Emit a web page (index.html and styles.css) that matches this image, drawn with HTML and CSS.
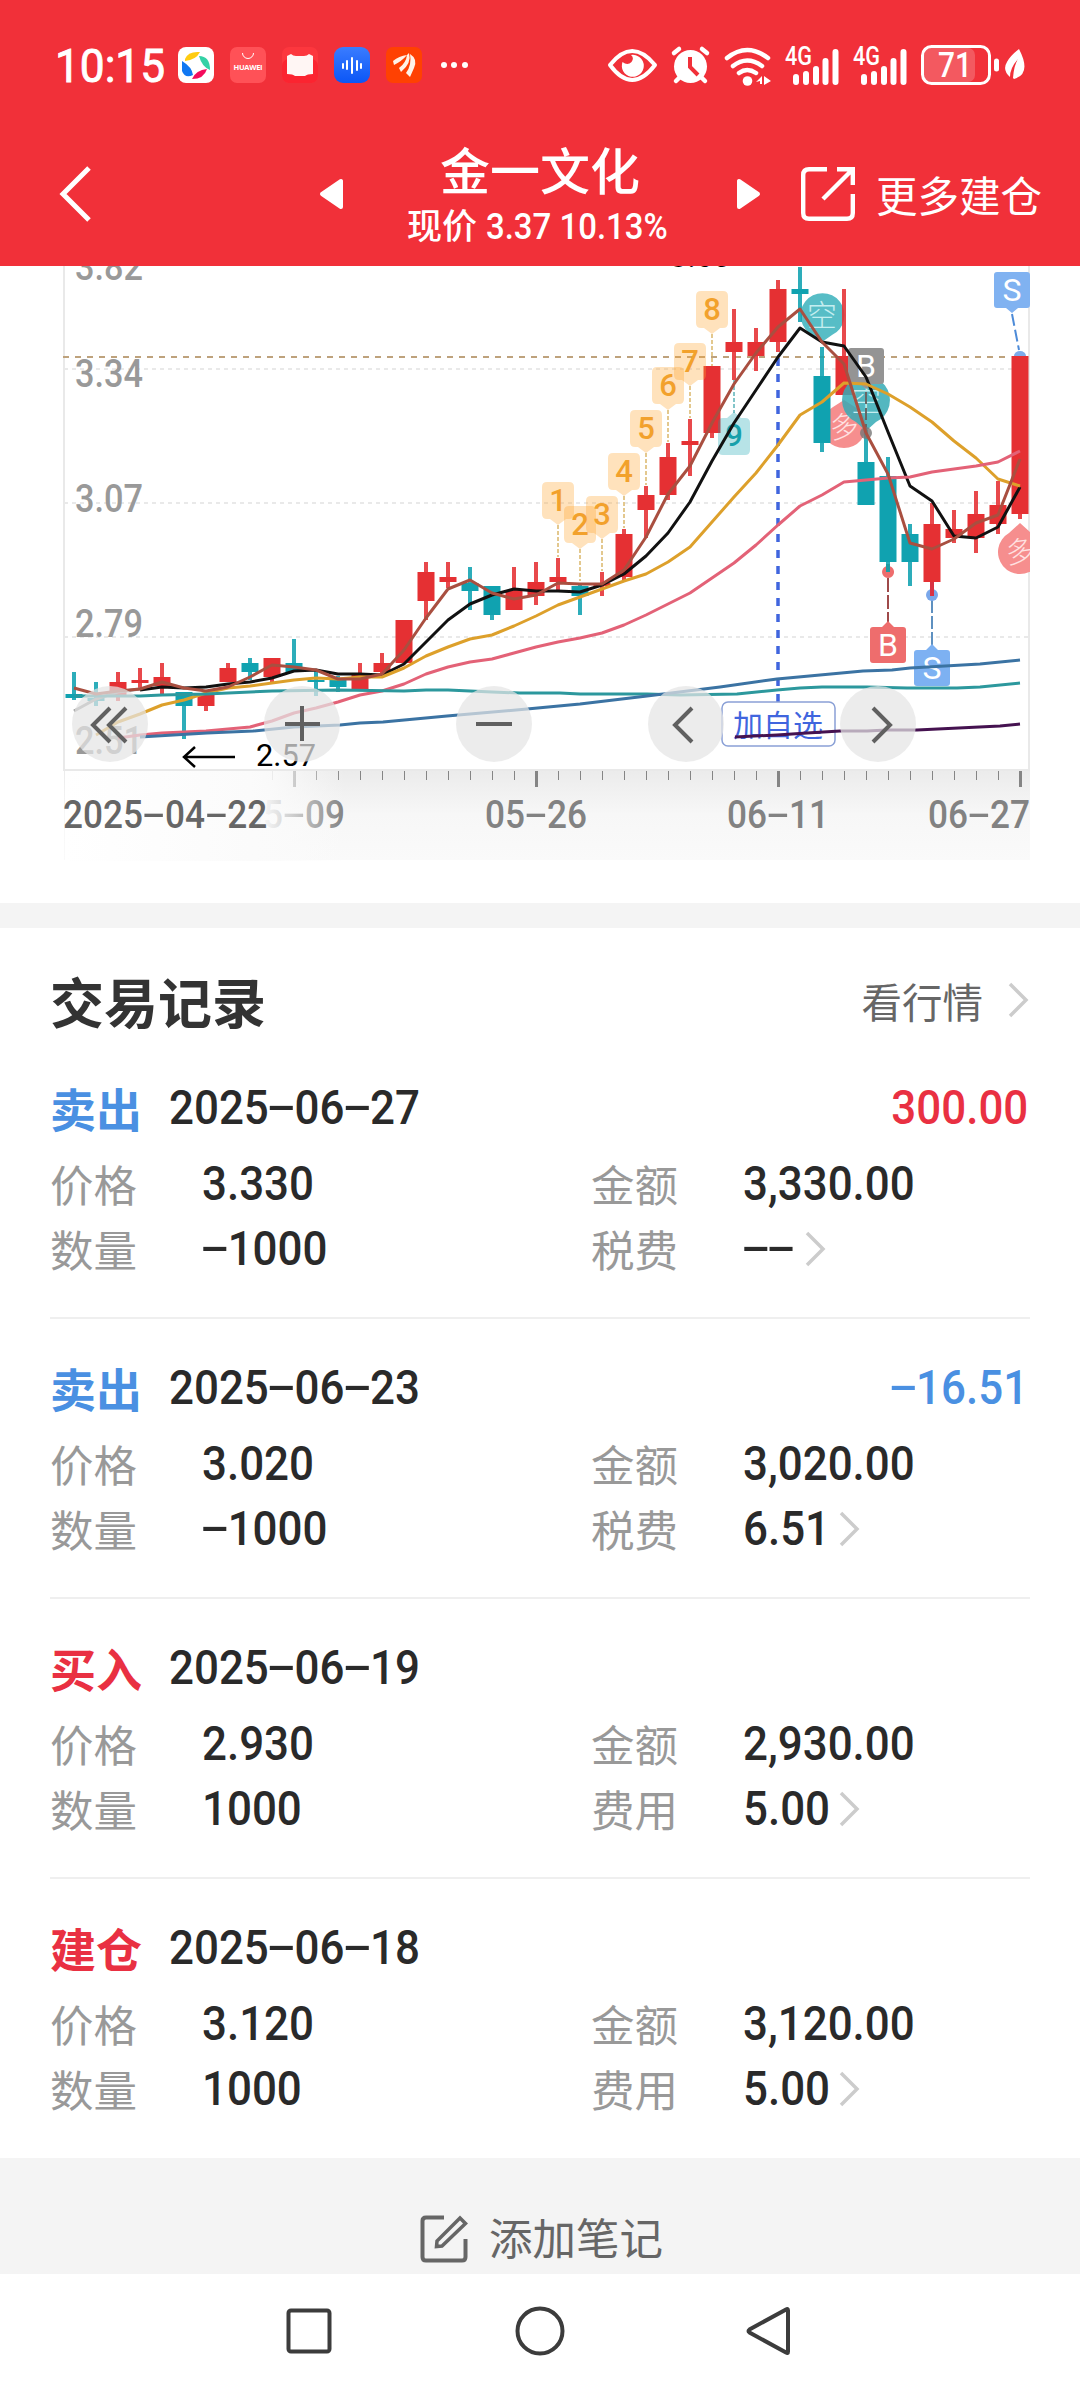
FILE: index.html
```html
<!DOCTYPE html>
<html lang="zh-CN">
<head>
<meta charset="utf-8">
<meta name="viewport" content="width=device-width">
<title>金一文化</title>
<link rel="stylesheet" href="styles.css">
</head>
<body>
<header class="header">
  <div class="status">
    <span class="clock"><span class="num">10:15</span></span>
    <div class="apps">
      <svg width="36" height="36" viewBox="0 0 36 36"><rect width="36" height="36" rx="8" fill="#fff"/><path d="M7 12Q10 4 22 5Q18 13 7 14Z" fill="#fc1"/><path d="M21 9Q32 9 32 23Q24 20 21 9Z" fill="#34d1a5"/><path d="M4 14Q14 20 15 28Q7 32 4 24Z" fill="#1178f2"/><path d="M29 22Q26 32 14 32Q18 23 29 22Z" fill="#f40b5c"/></svg>
      <svg width="36" height="36" viewBox="0 0 36 36"><rect width="36" height="36" rx="7" fill="#ff5157"/><path d="M12.500 6a5.500 5.500 0 0 0 11 0" fill="none" stroke="#fff" stroke-width="1"/><text x="3.500" y="23" class="brand" textLength="29">HUAWEI</text></svg>
      <svg width="36" height="36" viewBox="0 0 36 36"><rect width="36" height="36" rx="7" fill="#fc373e"/><rect y="12" width="36" height="24" rx="7" fill="#fb2430"/><path d="M5 9L9 7Q11 9 14 9H22Q25 9 27 7L31 9V27Q25 27 23 29H13Q11 27 5 27Z" fill="#fff6f4"/></svg>
      <svg width="36" height="36" viewBox="0 0 36 36"><defs><linearGradient id="wave" x2="0" y2="1"><stop stop-color="#3a7cff"/><stop offset="1" stop-color="#0b56f6"/></linearGradient></defs><rect width="36" height="36" rx="9" fill="url(#wave)"/><path d="M9 17v4M13 14v8M18 11v15M23 14v9M27 17v4" stroke="#fff" stroke-width="2" stroke-linecap="round"/></svg>
      <svg width="36" height="36" viewBox="0 0 36 36"><rect width="36" height="36" rx="7" fill="#ff4102"/><path d="M7 14Q13 9 21 8Q16 14 8 18ZM13 21Q20 16 21 8L23 6Q26 16 15 25ZM20 26Q26 18 24 7Q32 12 28 21L24 30Z" fill="#fff3e8"/></svg>
      <svg class="more" width="28" height="8" viewBox="0 0 28 8"><circle cx="4" cy="4" r="3" fill="#fff"/><circle cx="14" cy="4" r="3" fill="#fff"/><circle cx="25" cy="4" r="3" fill="#fff"/></svg>
    </div>
    <svg class="indicators" width="424" height="44" viewBox="604 42 424 44">
      <path d="M610 64Q632 36 655 64Q632 94 610 64Z" fill="none" stroke="#fff" stroke-width="4" stroke-linejoin="round"/>
      <path d="M631 54a11 11 0 1 1 -8.500 7q5 4 9 0q3-4-.5-7z" fill="#fff"/>
      <circle cx="690.500" cy="65.500" r="16.500" fill="#fff"/><path d="M674 52l5-4M707 52l-5-4M680 76l-4 4M701 76l4 4" stroke="#fff" stroke-width="4.500" stroke-linecap="round"/><path d="M690 56v10l8 8" fill="none" stroke="#f13039" stroke-width="4"/>
      <g fill="none" stroke="#fff" stroke-width="4.500" stroke-linecap="round"><path d="M727 57q20-16 41 0M733 65q14-11 29 0M739 72q8-6 17 0"/></g><circle cx="747.500" cy="80" r="4.800" fill="#fff"/><path d="M756 81l6-6v8h-2v-3zM764 75v9l7-4z" fill="#fff"/>
      <g stroke="#fff" stroke-width="6" stroke-linecap="round"><path d="M796 76v5M806 73v8M816 68v13M825.500 60v21M835.500 51v30"/><path d="M864 76v5M874 73v8M884 68v13M893.500 60v21M903.500 51v30"/></g>
      <text x="785" y="64" class="net" textLength="27" lengthAdjust="spacingAndGlyphs">4G</text><text x="853" y="64" class="net" textLength="27" lengthAdjust="spacingAndGlyphs">4G</text>
      <rect x="924" y="47" width="51" height="34" rx="7" fill="#fff" opacity=".2"/><rect x="922.500" y="45.500" width="67" height="37" rx="9" fill="none" stroke="#fff" stroke-width="3"/><text x="938" y="76" class="charge" textLength="34" lengthAdjust="spacingAndGlyphs">71</text><path d="M996.500 60v8" stroke="#fff" stroke-width="5" stroke-linecap="round"/>
      <path d="M1019 48q13 25-5 30l-1-1q1-13 5-19q-8 9-8 18q-8-7-3-15q3-6 12-13z" fill="#fff"/>
    </svg>
  </div>
  <nav class="titlebar">
    <svg class="back" width="34" height="58" viewBox="0 0 34 58"><path d="M31 3L5 29L31 55" fill="none" stroke="#fff" stroke-width="5"/></svg>
    <svg class="prev" width="24" height="32" viewBox="0 0 24 32"><path d="M22 3V29L3 16Z" fill="#fff" stroke="#fff" stroke-width="4" stroke-linejoin="round"/></svg>
    <div class="stock">
      <h1>金一文化</h1>
      <p>现价 <span class="num">3.37 10.13%</span></p>
    </div>
    <svg class="next" width="24" height="32" viewBox="0 0 24 32"><path d="M2 3V29L21 16Z" fill="#fff" stroke="#fff" stroke-width="4" stroke-linejoin="round"/></svg>
    <svg class="share" width="54" height="54" viewBox="0 0 54 54"><path d="M26 2.200H8Q2.200 2.200 2.200 8V46Q2.200 51.800 8 51.800H46Q51.800 51.800 51.800 46V27M36 2.200H51.800V18M51 3L22 32" fill="none" stroke="#fff" stroke-width="4.400"/></svg>
    <span class="open-more">更多建仓</span>
  </nav>
</header>

<section class="chart">
  <svg id="kline" width="1080" height="637" viewBox="0 266 1080 637">
    <defs>
      <linearGradient id="strip" x2="0" y2="1"><stop stop-color="#ebebeb"/><stop offset=".5" stop-color="#f7f7f7"/><stop offset="1" stop-color="#fafafa"/></linearGradient>
      <clipPath id="plot"><rect x="63" y="266" width="967" height="640"/></clipPath>
    </defs>
    <rect x="64" y="769" width="966" height="91" fill="url(#strip)"/>
    <g id="ticks"></g>
    <path d="M64 369H1030M64 503H1030M64 637H1030" stroke="#e9e9e9" stroke-width="2" stroke-dasharray="4 4"/>
    <path d="M64 266V770H1029V266" fill="none" stroke="#e9e9e9" stroke-width="2"/>
    <path d="M63 357H1011" stroke="#bea27c" stroke-width="2" stroke-dasharray="6 6"/>
    <g class="scale">
      <text x="75" y="280" textLength="68" lengthAdjust="spacingAndGlyphs">3.82</text><text x="75" y="387" textLength="68" lengthAdjust="spacingAndGlyphs">3.34</text><text x="75" y="512" textLength="68" lengthAdjust="spacingAndGlyphs">3.07</text><text x="75" y="637" textLength="68" lengthAdjust="spacingAndGlyphs">2.79</text><text x="75" y="754" textLength="68" lengthAdjust="spacingAndGlyphs">2.51</text>
    </g>
    <text x="670" y="267" class="extreme">3.60</text>
    <path d="M778 358V702" stroke="#4065de" stroke-width="3.500" stroke-dasharray="8 8"/>
    <rect x="722" y="702" width="113" height="44" rx="6" fill="#fff" stroke="#8aa0d6" stroke-width="1.500"/>
    <text x="733" y="736" class="watch">加自选</text>
    <g clip-path="url(#plot)">
      <path d="M813 335A22 22 0 1 1 832 335L822 342Z" fill="#57bdc6"/><text x="822" y="326" class="balloon cyan">空</text>
      <path d="M833 407L844 400L855 407A22 22 0 1 1 833 407Z" fill="#f68e8e"/><text x="844" y="437" class="balloon slant" transform="rotate(-8 844 426)">多</text>
      <path d="M1009 533L1020 523L1031 533A22 22 0 1 1 1009 533Z" fill="#f68e8e"/><text x="1020" y="562" class="balloon slant" transform="rotate(-8 1020 551)">多</text>
    </g>
    <g id="candles"></g>
    <path d="M856 422A24 24 0 1 1 876 422L866 431Z" fill="#35aab5" opacity=".85"/><text x="866" y="411" class="balloon cyan">空</text>
    <g id="counts"></g>
    <path d="M866 392V430" stroke="#666" stroke-width="2" stroke-dasharray="12 4"/><circle cx="866" cy="433" r="6" fill="#777" opacity=".8"/>
    <path d="M851 348h30q3 0 3 3v30q0 3-3 3h-9l-6 5l-6-5h-9q-3 0-3-3v-30q0-3 3-3z" fill="#949494"/><text x="866" y="377" class="deal">B</text>
    <path d="M1012 314L1019 350" stroke="#4d8bd8" stroke-width="2" stroke-dasharray="12 4"/><path d="M1014 356a6 5 0 0 1 12 0z" fill="#7dabea"/>
    <path d="M997 272h30q3 0 3 3v30q0 3-3 3h-9l-6 5l-6-5h-9q-3 0-3-3v-30q0-3 3-3z" fill="#80b2f1"/><text x="1012" y="301" class="deal">S</text>
    <path d="M888 578V624" stroke="#9f4a4a" stroke-width="2" stroke-dasharray="14 3"/><path d="M888 566a6 6 0 1 0 .1 0M873 627h9l6-6l6 6h9q3 0 3 3v30q0 3-3 3h-30q-3 0-3-3v-30q0-3 3-3z" fill="#ee6d6d"/><text x="888" y="656" class="deal">B</text>
    <path d="M932 600V648" stroke="#5e90c0" stroke-width="2" stroke-dasharray="13 3"/><path d="M917 650h9l6-6l6 6h9q3 0 3 3v30q0 3-3 3h-30q-3 0-3-3v-30q0-3 3-3z" fill="#7db1f2"/><circle cx="932" cy="595" r="6" fill="#7aa7ea"/><text x="932" y="679" class="deal">S</text>
    <path d="M888 564v8" stroke="#1e9ca4" stroke-width="4"/><path d="M932 582v14" stroke="#d93243" stroke-width="4"/>
    <g id="averages"></g>
    <path d="M195 747L184 757L195 767M184 757H235" fill="none" stroke="#000" stroke-width="2.500"/>
    <text x="256" y="766" class="extreme" textLength="60" lengthAdjust="spacingAndGlyphs">2.57</text>
  </svg>
  <div class="dates">
    <span class="date d1"><span class="num">05<i class="dash">-</i>09</span></span>
    <span class="fade"></span>
    <span class="date d0"><span class="num">2025<i class="dash">-</i>04<i class="dash">-</i>22</span></span>
    <span class="date d2"><span class="num">05<i class="dash">-</i>26</span></span>
    <span class="date d3"><span class="num">06<i class="dash">-</i>11</span></span>
    <span class="date d4"><span class="num">06<i class="dash">-</i>27</span></span>
  </div>
  <div class="controls">
    <button aria-label="最早"><svg viewBox="0 0 76 76"><path d="M38 22L21 39L38 56M54 22L37 39L54 56"/></svg></button>
    <button aria-label="放大"><svg viewBox="0 0 76 76"><path d="M21 38H56M38 20V55"/></svg></button>
    <button aria-label="缩小"><svg viewBox="0 0 76 76"><path d="M20 38H56"/></svg></button>
    <button aria-label="向前"><svg viewBox="0 0 76 76"><path d="M44 22L27 39L44 56"/></svg></button>
    <button aria-label="向后"><svg viewBox="0 0 76 76"><path d="M33 22L50 39L33 56"/></svg></button>
  </div>
</section>

<main class="records">
  <div class="records-head">
    <h2>交易记录</h2>
    <a class="quote">看行情<svg class="chev" width="22" height="36" viewBox="0 0 22 36"><path d="M2 2L18 18L2 34"/></svg></a>
  </div>

  <article class="record">
    <div class="top"><b class="sell">卖出</b><span class="num">2025<i class="dash">-</i>06<i class="dash">-</i>27</span><span class="num profit up">300.00</span></div>
    <div class="row"><label>价格</label><span class="num">3.330</span><label>金额</label><span class="num">3,330.00</span></div>
    <div class="row"><label>数量</label><span class="num"><i class="dash">-</i>1000</span><label>税费</label><span class="fee none"><span class="num"><i class="dash">-</i><i class="dash">-</i></span><svg class="chev" width="22" height="36" viewBox="0 0 22 36"><path d="M2 2L18 18L2 34"/></svg></span></div>
  </article>
  <article class="record">
    <div class="top"><b class="sell">卖出</b><span class="num">2025<i class="dash">-</i>06<i class="dash">-</i>23</span><span class="num profit down"><i class="dash">-</i>16.51</span></div>
    <div class="row"><label>价格</label><span class="num">3.020</span><label>金额</label><span class="num">3,020.00</span></div>
    <div class="row"><label>数量</label><span class="num"><i class="dash">-</i>1000</span><label>税费</label><span class="fee"><span class="num">6.51</span><svg class="chev" width="22" height="36" viewBox="0 0 22 36"><path d="M2 2L18 18L2 34"/></svg></span></div>
  </article>
  <article class="record">
    <div class="top"><b class="buy">买入</b><span class="num">2025<i class="dash">-</i>06<i class="dash">-</i>19</span></div>
    <div class="row"><label>价格</label><span class="num">2.930</span><label>金额</label><span class="num">2,930.00</span></div>
    <div class="row"><label>数量</label><span class="num">1000</span><label>费用</label><span class="fee"><span class="num">5.00</span><svg class="chev" width="22" height="36" viewBox="0 0 22 36"><path d="M2 2L18 18L2 34"/></svg></span></div>
  </article>
  <article class="record">
    <div class="top"><b class="buy">建仓</b><span class="num">2025<i class="dash">-</i>06<i class="dash">-</i>18</span></div>
    <div class="row"><label>价格</label><span class="num">3.120</span><label>金额</label><span class="num">3,120.00</span></div>
    <div class="row"><label>数量</label><span class="num">1000</span><label>费用</label><span class="fee"><span class="num">5.00</span><svg class="chev" width="22" height="36" viewBox="0 0 22 36"><path d="M2 2L18 18L2 34"/></svg></span></div>
  </article>
</main>

<div class="note">
  <svg width="48" height="48" viewBox="0 0 48 48" fill="none" stroke="#666" stroke-width="4"><path d="M24 2.500H6Q2.500 2.500 2.500 6V42Q2.500 45.500 6 45.500H42Q45.500 45.500 45.500 42V24"/><path d="M40 3L45.500 8.500L22 31L16.500 31.500L17 26Z" stroke-width="3.500"/></svg>
  <span>添加笔记</span>
</div>
<footer class="sysnav">
  <svg width="48" height="52" viewBox="0 0 48 52"><rect x="3.500" y="5.500" width="41" height="41" rx="2.500"/></svg>
  <svg width="52" height="52" viewBox="0 0 52 52"><circle cx="26" cy="26" r="22.500"/></svg>
  <svg width="48" height="52" viewBox="0 0 48 52"><path d="M39 4.500Q41 3 41 5.500V46.500Q41 49 39 47.500L2.500 27.500Q0.500 26 2.500 24.500Z"/></svg>
</footer>
<script src="chart.js"></script>
</body>
</html>
```
FILE: styles.css
```css
* { box-sizing: border-box; }
body { margin: 0; width: 1080px; background: #fff; font-family: Roboto, "Noto Sans CJK SC", sans-serif; color: #2a2a2a; }
h1, h2, p { margin: 0; }
svg { display: block; flex: none; }

.num { display: inline-block; white-space: nowrap; transform: scaleX(.905); transform-origin: left center; font-family: Roboto, sans-serif; font-weight: 500; }
.dash { display: inline-block; width: .585em; text-align: center; font-style: normal; font-weight: 400; transform: translateY(-.03em) scale(2.2, 1.15); }

.header { height: 266px; background: #f13039; color: #fff; }
.status { height: 130px; display: flex; align-items: center; padding-left: 55px; }
.clock { width: 123px; font-size: 47px; line-height: 54px; }
.clock .num { transform: translateY(1px) scaleX(.94); font-weight: 400; -webkit-text-stroke: .9px #fff; }
.apps { display: flex; align-items: center; gap: 16px; }
.more { margin-left: 2px; }
.indicators { margin-left: auto; margin-right: 52px; }
.brand { font: 700 7.500px "Open Sans", sans-serif; fill: #fff; }
.net { font: 500 25px Roboto, sans-serif; fill: #fff; }
.charge { font: 500 35px Roboto, sans-serif; fill: #fff; }
.titlebar { height: 136px; display: flex; align-items: center; padding: 0 36px 8px 58px; }
.prev { margin-left: 227px; }
.stock { width: 394px; padding-top: 10px; text-align: center; display: flex; flex-direction: column; align-items: center; }
.stock h1 { font-size: 50px; line-height: 57px; font-weight: 500; }
.stock p { font-size: 35px; line-height: 51px; font-weight: 500; white-space: nowrap; width: 266px; text-align: left; }
.stock .num { font-size: 36px; transform: scaleX(.915); }
.share { margin-left: 40px; }
.open-more { margin-left: 21px; font-size: 41.500px; white-space: nowrap; }

.chart { position: relative; height: 637px; }
.scale text { font: 500 38px Roboto, sans-serif; fill: #999; }
.extreme { font: 400 31px Roboto, sans-serif; fill: #000; }
.watch { font: 400 30px "Noto Sans CJK SC", sans-serif; fill: #4065de; }
.balloon { font: 300 30px "Noto Sans CJK SC", sans-serif; fill: #c4eef0; text-anchor: middle; }
.slant { fill: #ffe1e1; font-size: 29px; }
.deal { font: 400 32px Roboto, sans-serif; fill: #fff; text-anchor: middle; }
.count { font: 500 31px Roboto, sans-serif; fill: #f2a12c; text-anchor: middle; }
.nine { fill: #18a0ab; }
.date { position: absolute; top: 527px; font-size: 38px; line-height: 44px; color: #828282; }
.date .num { transform: scaleX(.925); }
.date .dash { width: .63em; }
.d0 { left: 63px; color: #666; }
.d1 { left: 243px; }
.d2 { left: 485px; }
.d3 { left: 727px; }
.d4 { left: 928px; }
.fade { position: absolute; left: 65px; top: 505px; width: 280px; height: 90px; background: linear-gradient(90deg, #fff, #fbfbfb 66%, rgba(251, 251, 251, .9) 73%, rgba(251, 251, 251, 0)); }
.controls { position: absolute; left: 72px; top: 420px; display: flex; gap: 116px; }
.controls button { width: 76px; height: 76px; padding: 0; border: 0; border-radius: 50%; background: rgba(228, 228, 228, .72); }
.controls path { fill: none; stroke: #606060; stroke-width: 4; }

.records { border-top: 25px solid #f4f4f4; padding: 0 50px; }
.records-head { height: 111px; padding-top: 20px; display: flex; justify-content: space-between; }
.records-head h2 { font-size: 54px; line-height: 115px; height: 106px; color: #333; font-weight: 700; }
.quote { display: flex; align-items: center; height: 104px; font-size: 40.500px; color: #666; }
.quote .chev { margin-left: 25px; }
.chev path { fill: none; stroke: #ccc; stroke-width: 3.500; }
.record { height: 280px; padding-top: 36px; border-bottom: 2px solid #efefef; font-size: 48.500px; }
.record:last-child { height: 279px; border-bottom: 0; }
.top { height: 64px; display: flex; align-items: center; }
.top b { width: 119px; font-size: 46px; padding-top: 0; }
.top b, label, .note { font-family: "Noto Sans CJK SC", sans-serif; }
.profit { margin-left: auto; transform-origin: right center; margin-right: 2px; }
.sell, .down { color: #4a90e2; }
.buy, .up { color: #e93042; }
.row { height: 65px; display: grid; grid-template-columns: 152px 389px 152px auto; align-items: center; }
.top + .row { margin-top: 12px; }
.row label { font-size: 43.500px; color: #999; }
.fee { display: flex; align-items: center; }
.fee.none { gap: 5px; }

.note { height: 116px; background: #f4f4f4; display: flex; justify-content: center; padding: 57px 0 0 3px; gap: 21px; color: #666; }
.note span { font-size: 43.500px; line-height: 44px; }
.sysnav { height: 114px; display: flex; justify-content: center; align-items: center; gap: 181px; background: #fff; }
.sysnav svg { fill: none; stroke: #3c3c3c; stroke-width: 4; overflow: visible; }
```
FILE: chart.js
```js
const NS = "http://www.w3.org/2000/svg";
const UP = "#e53033", DOWN = "#10a2b0";
const STEP = 22, FIRST = 74;

function add(parent, tag, attrs, text) {
  const el = document.createElementNS(NS, tag);
  for (const k in attrs) el.setAttribute(k, attrs[k]);
  if (text) el.textContent = text;
  document.getElementById(parent).appendChild(el);
}
const xOf = i => FIRST + STEP * i;

// high, body top, body bottom, low, rising
const candles = [
  [672,694,698,700,0],[682,698,701,706,0],[672,682,696,701,1],[668,680,683,690,1],[663,677,686,694,1],
  [692,692,706,739,0],[690,693,706,711,1],[663,668,682,682,1],[658,663,672,680,0],[658,658,677,682,1],
  [639,663,672,672,0],[670,680,682,696,0],[676,680,687,692,0],[663,673,689,689,1],[653,663,672,675,1],
  [620,620,663,663,1],[562,572,601,620,1],[562,577,582,588,1],[567,583,591,610,0],[586,586,615,620,0],
  [567,590,610,610,1],[562,582,596,605,1],[558,577,582,592,1],[585,586,596,615,0],[572,583,586,596,1],
  [529,534,577,580,1],[486,495,510,538,1],[443,457,495,500,1],[419,441,445,476,1],[366,366,433,438,1],
  [309,342,352,380,1],[328,342,356,371,1],[280,289,342,352,1],[267,289,294,322,0],[347,376,443,452,0],
  [289,356,395,395,1],[430,462,505,505,0],[457,476,562,572,0],[524,534,562,586,0],[503,524,582,595,1],
  [510,529,538,543,1],[491,514,538,553,1],[481,505,524,534,1],[356,356,514,519,1]
];
candles.forEach(([hi, top, bottom, lo, up], i) => {
  const fill = up ? UP : DOWN;
  add("candles", "rect", { x: xOf(i) - 2, y: hi, width: 4, height: lo - hi, fill, opacity: .88 });
  add("candles", "rect", { x: xOf(i) - 8.5, y: top, width: 17, height: bottom - top, fill });
});

const series = [
  { color: "#999", from: 0, y: [711,699,692,689] },
  { color: "#111", from: 3, y: [690,687,688,687,684,682,678,671,670,674,674,675,664,642,620,604,595,589,591,591,592,585,574,556,533,502,461,423,390,357,328,342,346,377,432,486,501,536,538,527,487] },
  { color: "#dda02b", from: 1, y: [735,722,714,705,700,693,688,686,683,680,678,679,677,677,668,656,647,639,635,626,616,605,597,589,581,574,562,547,522,497,473,445,415,402,383,384,394,407,422,441,458,479,486] },
  { color: "#e36277", from: 2, y: [738,735,733,732,731,729,727,721,713,708,702,695,691,684,674,667,662,659,653,647,642,638,633,625,615,604,593,578,563,545,525,506,495,482,480,478,477,472,469,466,462,451] },
  { color: "#2c989d", xy: "75,696 140,696 162,695 206,694 272,691 338,690 404,691 426,690 448,690 492,692 520,693 560,693 580,694 647,694 680,695 737,694 777,690 800,688 822,687 867,687 907,688 957,688 980,687 1020,683" },
  { color: "#3b73a3", xy: "140,737 207,733 253,731 294,727 340,725 360,723 383,722 447,716 527,709 580,704 647,696 720,687 777,679 863,671 892,670 910,668 980,664 1020,660" },
  { color: "#451250", xy: "735,737 777,735 807,733 840,731 867,731 887,730 917,730 1000,726 1020,724" },
  { color: "#a94f40", from: 0, y: [688,694,691,689,682,688,691,687,677,665,667,670,679,679,674,650,618,589,580,593,599,595,583,584,584,570,537,494,466,423,384,353,327,309,342,364,433,474,543,549,539,523,515,459] }
];
series.forEach(s => {
  const points = s.xy || s.y.map((y, k) => xOf(s.from + k) + "," + y).join(" ");
  add("averages", "polyline", { points, fill: "none", stroke: s.color, "stroke-width": 3, "stroke-linejoin": "round" });
});

// consecutive-day count flags above the candles
[482, 506, 496, 453, 410, 367, 343, 291].forEach((top, k) => {
  const x = xOf(22 + k);
  add("counts", "path", { d: `M${x} ${top + 43}V${top + 75}`, stroke: "#e3c88e", "stroke-width": 2, "stroke-dasharray": "4 2" });
  add("counts", "path", { d: `M${x - 11} ${top}h22q5 0 5 5v27q0 5-5 5h-3l-8 6l-8-6h-3q-5 0-5-5v-27q0-5 5-5z`, fill: "#ffa62e", opacity: .32 });
  add("counts", "text", { x, y: top + 29, class: "count" }, String(k + 1));
});
add("counts", "path", { d: "M734 380V413", stroke: "#83c5c9", "stroke-width": 2, "stroke-dasharray": "4 2" });
add("counts", "path", { d: "M723 418h4l7-6l7 6h4q5 0 5 5v27q0 5-5 5h-22q-5 0-5-5v-27q0-5 5-5z", fill: "#10a2b0", opacity: .3 });
add("counts", "text", { x: 734, y: 446, class: "count nine" }, "9");

for (let i = 9; i < 44; i++) {
  const major = (i - 10) % 11 === 0;
  add("ticks", "rect", { x: xOf(i) + (major ? -1 : 0), y: 771, width: major ? 3 : 1, height: major ? 16 : 9, fill: "#858585" });
}
```
